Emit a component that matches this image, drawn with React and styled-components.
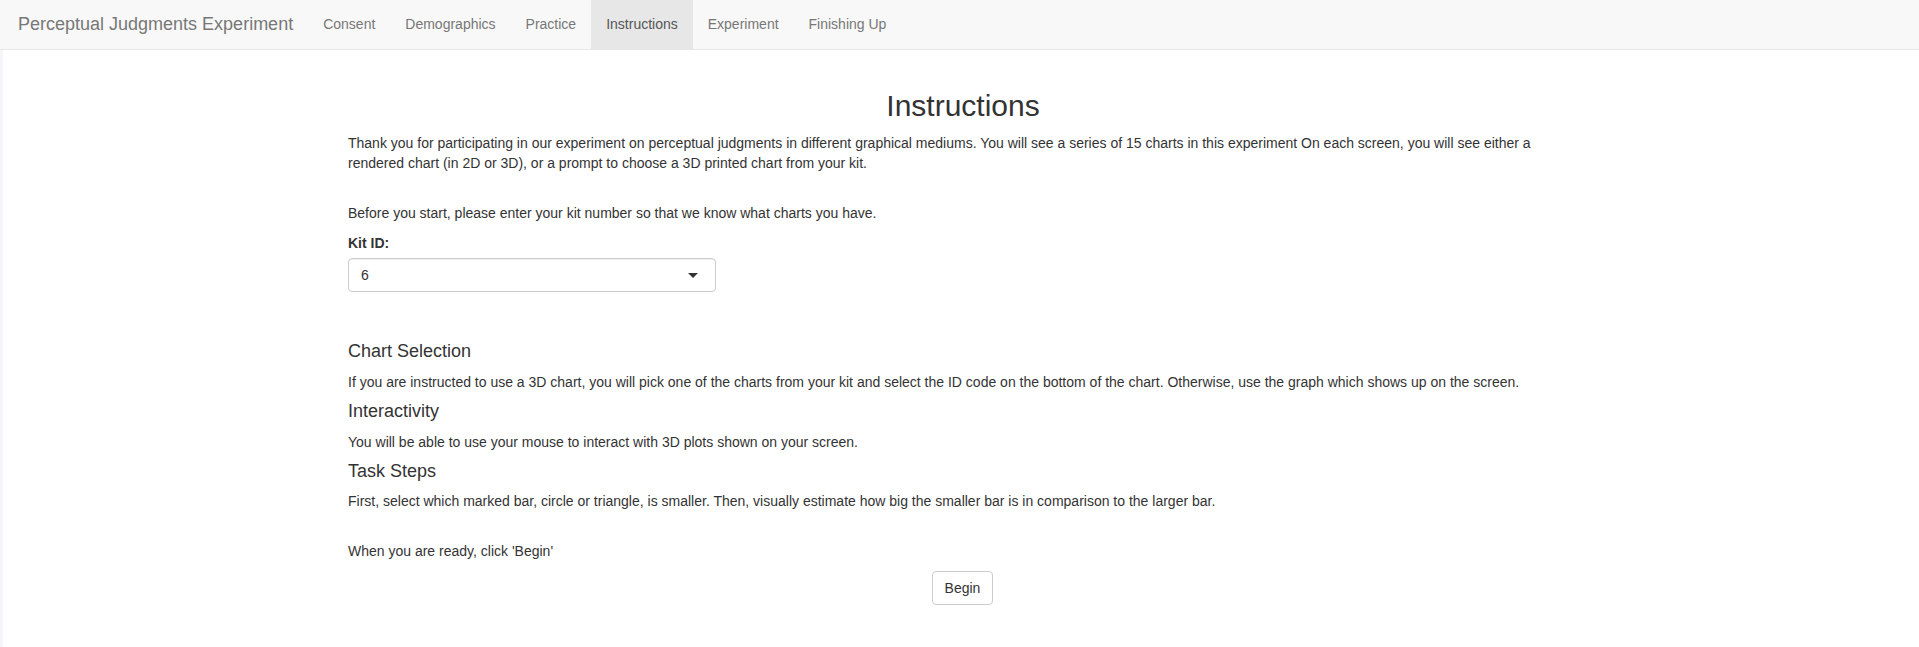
import React from "react";
import styled, { createGlobalStyle } from "styled-components";

const Global = createGlobalStyle`
  * { box-sizing: border-box; }
  html, body { margin: 0; padding: 0; background: #fff; }
  body {
    font-family: "Liberation Sans", Arial, Helvetica, sans-serif;
    font-size: 14px;
    line-height: 1.42857143;
    color: #333;
  }
`;

const Navbar = styled.nav`
  display: flex;
  align-items: stretch;
  height: 50px;
  background: #f8f8f8;
  border-bottom: 1px solid #e7e7e7;
  padding-left: 3px;
`;

const Brand = styled.a`
  display: block;
  padding: 14px 15px 15px;
  font-size: 18px;
  line-height: 20px;
  height: 49px;
  color: #777;
  text-decoration: none;
`;

const NavList = styled.ul`
  display: flex;
  list-style: none;
  margin: 0;
  padding: 0;
`;

const NavLink = styled.a`
  display: block;
  padding: 14px 15px 15px;
  line-height: 20px;
  height: 49px;
  color: ${(p) => (p.$active ? "#555" : "#777")};
  background: ${(p) => (p.$active ? "#e7e7e7" : "transparent")};
  text-decoration: none;
`;

const Main = styled.main`
  border-left: 3px solid #f4f6f9;
  min-height: calc(100vh - 50px);
  padding-top: 20px;
`;

const Column = styled.div`
  width: 1226px;
  margin: 0 auto;
`;

const Title = styled.h2`
  font-size: 30px;
  font-weight: 500;
  line-height: 1.1;
  margin: 19px 0 11px;
  padding-left: 4px;
  text-align: center;
  color: #333;
`;

const Para = styled.p`
  margin: 0 0 10px;
`;

const Spacer = styled.div`
  height: ${(p) => p.$h}px;
`;

const FormGroup = styled.div`
  margin-bottom: 15px;
`;

const Label = styled.label`
  display: block;
  font-weight: 700;
  margin-bottom: 5px;
`;

const SelectBox = styled.div`
  position: relative;
  width: 368px;
  height: 34px;
  border: 1px solid #ccc;
  border-radius: 4px;
  padding: 6px 12px;
  background: #fff;
  line-height: 20px;
  color: #333;
  box-shadow: inset 0 1px 1px rgba(0, 0, 0, 0.075);
`;

const Caret = styled.span`
  position: absolute;
  right: 17px;
  top: 14px;
  width: 0;
  height: 0;
  border-style: solid;
  border-width: 5px 5px 0 5px;
  border-color: #333 transparent transparent transparent;
`;

const SubHead = styled.h4`
  font-size: 18px;
  font-weight: 500;
  line-height: 1.1;
  margin: 10px 0;
  color: #333;
`;

const ButtonRow = styled.div`
  display: flex;
  justify-content: center;
  padding-left: 3px;
`;

const Button = styled.button`
  font-family: inherit;
  font-size: 14px;
  line-height: 20px;
  padding: 6px 12px;
  color: #333;
  background: #fff;
  border: 1px solid #ccc;
  border-radius: 4px;
  cursor: pointer;
`;

const tabs = ["Consent", "Demographics", "Practice", "Instructions", "Experiment", "Finishing Up"];

export default function App() {
  return (
    <>
      <Global />
      <Navbar>
        <Brand href="#">Perceptual Judgments Experiment</Brand>
        <NavList>
          {tabs.map((t) => (
            <li key={t}>
              <NavLink href="#" $active={t === "Instructions"}>{t}</NavLink>
            </li>
          ))}
        </NavList>
      </Navbar>
      <Main>
        <Column>
          <Title>Instructions</Title>
          <Para>
            Thank you for participating in our experiment on perceptual judgments in different graphical mediums. You will see a series of 15 charts in this experiment On each screen, you will see either a rendered chart (in 2D or 3D), or a prompt to choose a 3D printed chart from your kit.
          </Para>
          <Spacer $h={20} />
          <Para>Before you start, please enter your kit number so that we know what charts you have.</Para>
          <FormGroup>
            <Label>Kit ID:</Label>
            <SelectBox>
              6
              <Caret />
            </SelectBox>
          </FormGroup>
          <Spacer $h={25} />
          <SubHead>Chart Selection</SubHead>
          <Para>
            If you are instructed to use a 3D chart, you will pick one of the charts from your kit and select the ID code on the bottom of the chart. Otherwise, use the graph which shows up on the screen.
          </Para>
          <SubHead>Interactivity</SubHead>
          <Para>You will be able to use your mouse to interact with 3D plots shown on your screen.</Para>
          <SubHead>Task Steps</SubHead>
          <Para>
            First, select which marked bar, circle or triangle, is smaller. Then, visually estimate how big the smaller bar is in comparison to the larger bar.
          </Para>
          <Spacer $h={20} />
          <Para>When you are ready, click 'Begin'</Para>
          <ButtonRow>
            <Button>Begin</Button>
          </ButtonRow>
        </Column>
      </Main>
    </>
  );
}
